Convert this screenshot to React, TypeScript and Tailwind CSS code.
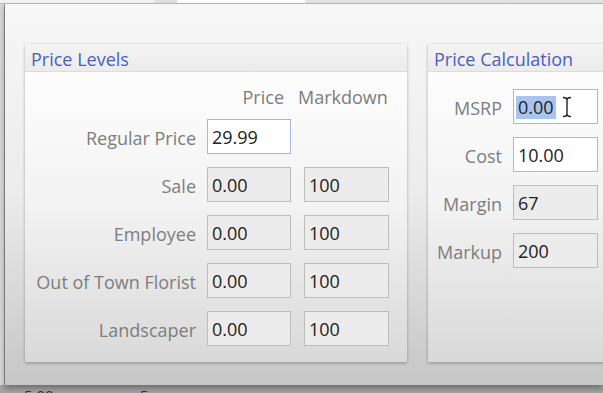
import React from "react";

const font = { fontFamily: '"Open Sans", "DejaVu Sans", sans-serif' };

function Field({ value, kind }: { value: string; kind: "focus" | "white" | "gray" }) {
  const cls =
    kind === "focus"
      ? "bg-white border-[#a4b8de]"
      : kind === "white"
      ? "bg-white border-[#b9b9b9]"
      : "bg-[#ececec] border-[#bdbdbd]";
  return (
    <div className={`h-[35px] border ${cls} flex items-center pl-[4px] pt-[2px] text-[18px] text-[#222]`}>
      {value}
    </div>
  );
}

function LevelRow({ label, price, markdown, first }: { label: string; price: string; markdown?: string; first?: boolean }) {
  return (
    <div className="flex items-center">
      <div className="w-[171px] pt-[3px] text-right text-[18px] text-[#7d7d7d] whitespace-nowrap">{label}</div>
      <div className="ml-[11px] w-[84px]">
        <Field value={price} kind={first ? "focus" : "gray"} />
      </div>
      {markdown !== undefined && (
        <div className="ml-[13px] w-[85px]">
          <Field value={markdown} kind="gray" />
        </div>
      )}
    </div>
  );
}

function CalcRow({ label, children }: { label: string; children: React.ReactNode }) {
  return (
    <div className="flex items-center">
      <div className="w-[74px] pt-[3px] text-right text-[18px] text-[#7d7d7d]">{label}</div>
      <div className="ml-[11px] w-[85px]">{children}</div>
    </div>
  );
}

function PanelHeader({ title }: { title: string }) {
  return (
    <div className="h-[28px] bg-gradient-to-b from-[#f4f4f4] to-[#ebebeb] border-b border-[#dcdcdc] flex items-center pl-[6px] pt-[3px] text-[18px] text-[#4a5ec2] whitespace-nowrap">
      {title}
    </div>
  );
}

export default function App() {
  return (
    <div className="w-[603px] h-[393px] overflow-hidden bg-[#9f9f9f] relative" style={font}>
      {/* top strip */}
      <div className="h-[4px] flex bg-[#f2f2f2] border-b border-[#bdbdbd]">
        <div className="w-[155px]" />
        <div className="w-[22px] bg-[#e0e0e0]" />
        <div className="w-[128px] bg-white" />
        <div className="flex-1 bg-[#e4e4e4]" />
      </div>
      <div className="flex h-[381px]">
        {/* left strip */}
        <div className="w-[5px] shrink-0 bg-[#d8d8d8] border-r border-[#8f8f8f]" />
        {/* dialog */}
        <div className="flex-1 min-w-0 overflow-hidden bg-gradient-to-b from-[#f7f7f7] via-[#ececec] to-[#c6c6c6] shadow-[0_3px_6px_rgba(0,0,0,0.35)] pl-[20px] pt-[40px] flex items-start">
          {/* Price Levels */}
          <div className="w-[382px] shrink-0 h-[318px] bg-gradient-to-b from-white via-[#f3f3f3] to-[#d9d9d9] shadow-[0_1px_3px_rgba(0,0,0,0.3)] flex flex-col">
            <PanelHeader title="Price Levels" />
            <div className="flex items-center h-[44px] pt-[6px]">
              <div className="w-[182px]" />
              <div className="w-[84px] text-right pr-[7px] text-[18px] text-[#7d7d7d]">Price</div>
              <div className="ml-[7px] text-[18px] text-[#7d7d7d]">Markdown</div>
            </div>
            <div className="flex flex-col gap-[13px] pt-[3px]">
              <LevelRow label="Regular Price" price="29.99" first />
              <LevelRow label="Sale" price="0.00" markdown="100" />
              <LevelRow label="Employee" price="0.00" markdown="100" />
              <LevelRow label="Out of Town Florist" price="0.00" markdown="100" />
              <LevelRow label="Landscaper" price="0.00" markdown="100" />
            </div>
          </div>
          {/* Price Calculation */}
          <div className="ml-[21px] w-[200px] shrink-0 h-[318px] bg-gradient-to-b from-white via-[#f3f3f3] to-[#d9d9d9] shadow-[0_1px_3px_rgba(0,0,0,0.3)] flex flex-col">
            <PanelHeader title="Price Calculation" />
            <div className="flex flex-col gap-[13px] pt-[17px]">
              <CalcRow label="MSRP">
                <div className="h-[35px] border bg-white border-[#a4b8de] flex items-center pl-[2px] pt-[2px] text-[18px] text-[#222] relative">
                  <span className="bg-[#a9c5ef] px-[2px] leading-[23px]">0.00</span>
                  <svg className="absolute left-[48px] top-[6px]" width="10" height="22" viewBox="0 0 10 22">
                    <path d="M1 1.5 Q5 1.5 5 4 L5 18 Q5 20.5 1 20.5 M9 1.5 Q5 1.5 5 4 M5 18 Q5 20.5 9 20.5" stroke="#222" strokeWidth="1.4" fill="none" />
                  </svg>
                </div>
              </CalcRow>
              <CalcRow label="Cost">
                <Field value="10.00" kind="white" />
              </CalcRow>
              <CalcRow label="Margin">
                <Field value="67" kind="gray" />
              </CalcRow>
              <CalcRow label="Markup">
                <Field value="200" kind="gray" />
              </CalcRow>
            </div>
          </div>
        </div>
      </div>
      {/* bottom strip behind */}
      <div className="flex h-[8px] bg-[#a3a3a3] text-[15px] text-[#333] leading-[24px] overflow-hidden">
        <div className="pl-[24px] w-[140px] -mt-[2px]">5.00</div>
        <div className="-mt-[2px]">5</div>
      </div>
    </div>
  );
}
